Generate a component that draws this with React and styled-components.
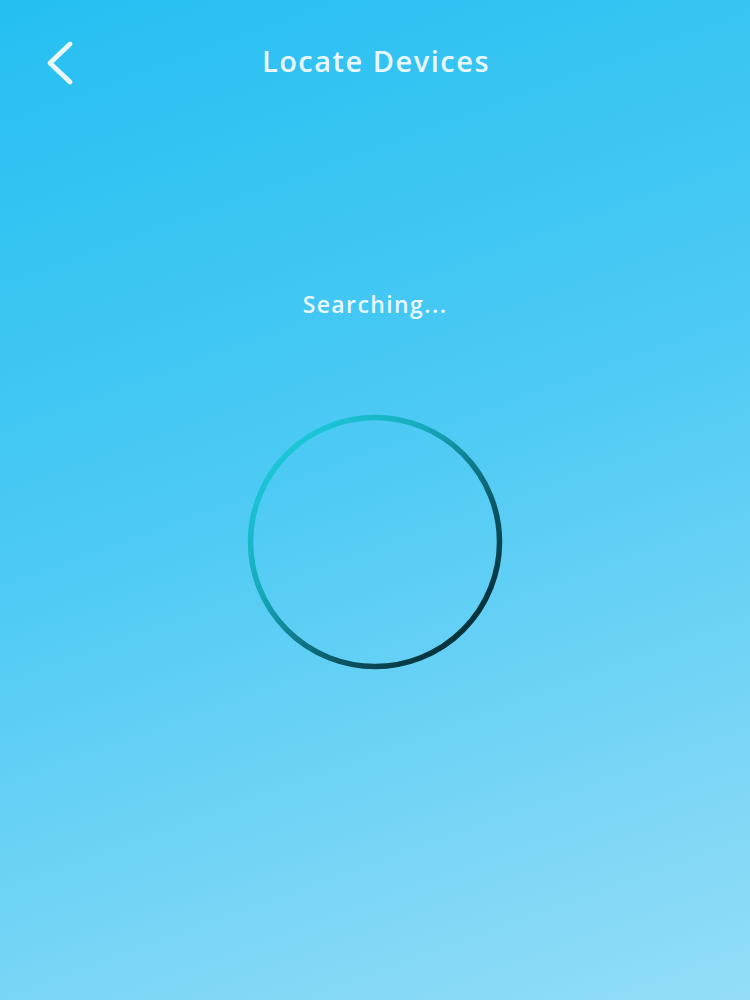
import React from 'react'
import styled, { createGlobalStyle } from 'styled-components'

const GlobalStyle = createGlobalStyle`
    html, body {
        margin: 0;
        padding: 0;
    }
    body {
        font-family: "Open Sans", "Noto Sans", sans-serif;
    }
`;

export default function App() {
    return (
        <Screen>
            <GlobalStyle />
            <Header>
                <BackButton aria-label="Back">
                    <svg width="30" height="46" viewBox="0 0 30 46" fill="none">
                        <path d="M26 4 L6 23 L26 42" stroke="#eaf8fe" strokeWidth="4.8" strokeLinecap="round" strokeLinejoin="round" />
                    </svg>
                </BackButton>
                <Title>Locate Devices</Title>
            </Header>
            <Status>Searching...</Status>
            <Spinner>
                <svg width="258" height="258" viewBox="0 0 258 258">
                    <defs>
                        <linearGradient id="ring" x1="0.1" y1="0.1" x2="0.9" y2="0.9">
                            <stop offset="0" stopColor="#1ccbdc" />
                            <stop offset="0.35" stopColor="#15a8b9" />
                            <stop offset="0.7" stopColor="#0b5866" />
                            <stop offset="1" stopColor="#062a33" />
                        </linearGradient>
                    </defs>
                    <circle cx="129" cy="129" r="124.5" fill="none" stroke="url(#ring)" strokeWidth="5.5" />
                </svg>
            </Spinner>
        </Screen>
    )
}

const Screen = styled.div`
    width: 750px;
    height: 1000px;
    background: linear-gradient(160deg, #25bff2 0%, #4ccaf4 45%, #7bd6f6 80%, #93ddf7 100%);
    display: flex;
    flex-direction: column;
    align-items: center;
    overflow: hidden;
`;

const Header = styled.div`
    position: relative;
    width: 100%;
    height: 124px;
    display: flex;
    justify-content: center;
    align-items: flex-start;
    padding-top: 40px;
    box-sizing: border-box;
`;

const BackButton = styled.button`
    position: absolute;
    left: 44px;
    top: 40px;
    background: none;
    border: none;
    padding: 0;
    cursor: pointer;
`;

const Title = styled.h1`
    margin: 0;
    font-size: 29px;
    font-weight: 600;
    color: #e8f8fe;
    letter-spacing: 1.5px;
    line-height: 42px;
    padding-left: 2px;
`;

const Status = styled.div`
    margin-top: 165px;
    font-size: 23px;
    font-weight: 600;
    color: #e8f8fe;
    letter-spacing: 1.4px;
    line-height: 30px;
`;

const Spinner = styled.div`
    margin-top: 94px;
    width: 258px;
    height: 258px;
`;
